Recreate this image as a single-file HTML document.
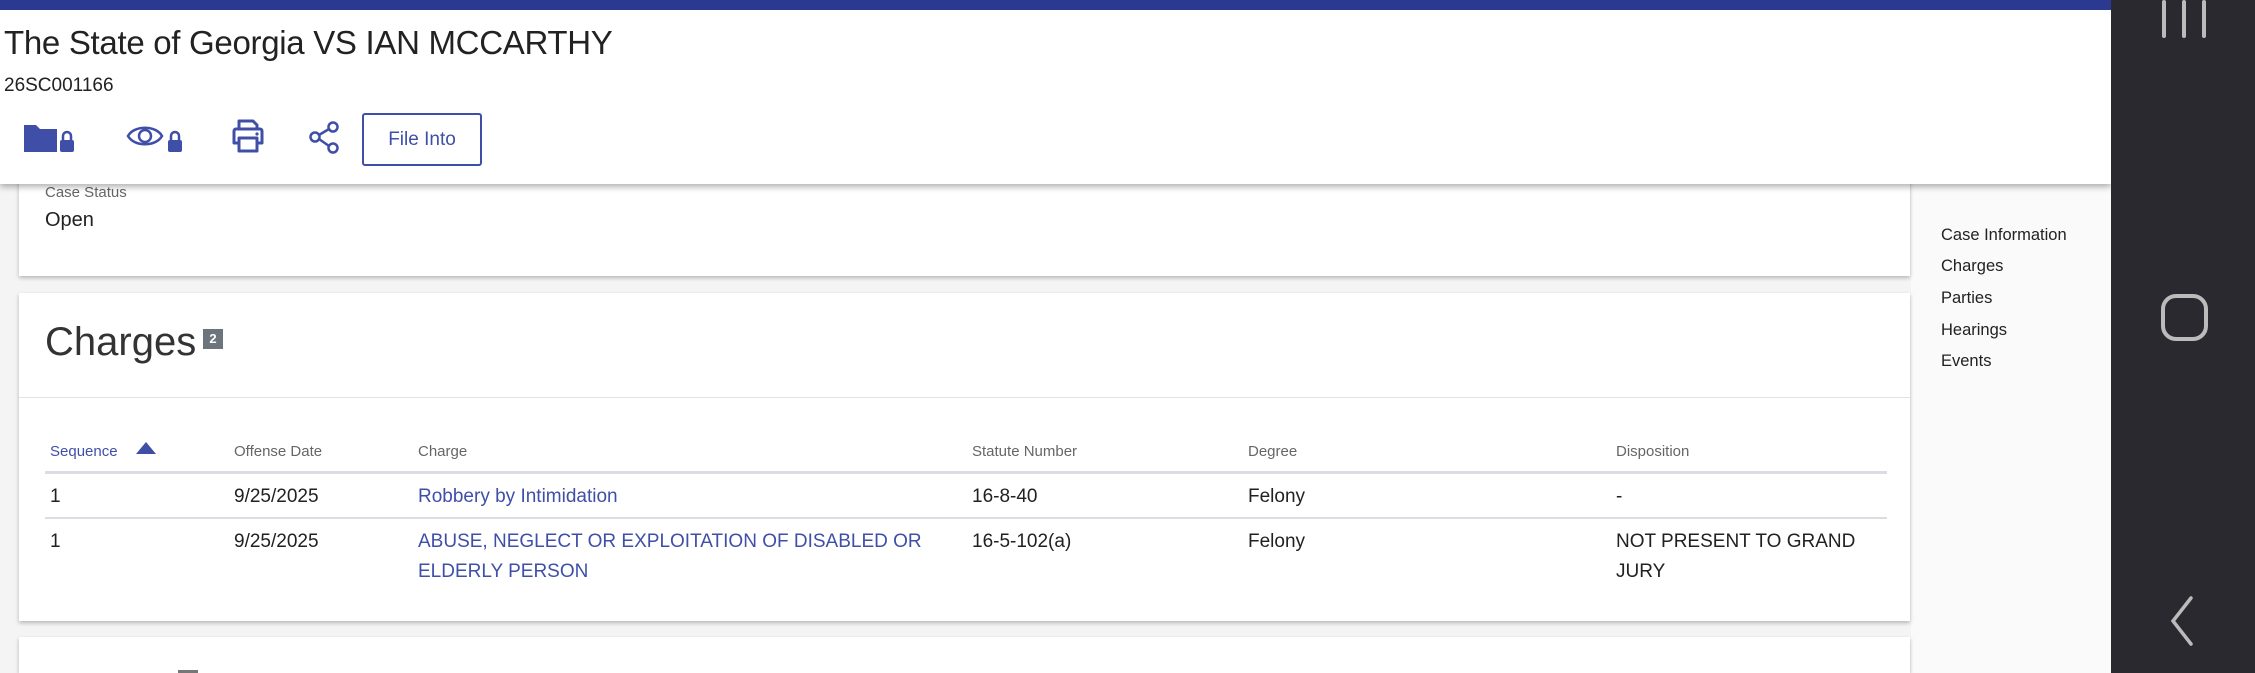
<!DOCTYPE html>
<html><head><meta charset="utf-8"><style>
*{box-sizing:border-box;margin:0;padding:0}
html{width:2255px;height:673px;overflow:hidden}
body{width:2255px;height:673px;overflow:hidden;background:#f4f4f4;font-family:"Liberation Sans",sans-serif;color:#212121;position:relative}
.abs{position:absolute}
.card{position:absolute;background:#fff;box-shadow:0 2px 4px rgba(0,0,0,.25)}
.th{position:absolute;top:443px;font-size:15px;color:#666}
.td{position:absolute;font-size:19px;line-height:30px;color:#212121}
.lnk{color:#3f4fa8}
.side a{display:block;position:absolute;left:1941px;font-size:16.5px;color:#222;text-decoration:none}
</style></head><body>
<div class="abs" style="left:1911px;top:184px;width:200px;height:489px;background:#fafafa"></div>
<div class="side">
<a style="top:226px">Case Information</a>
<a style="top:257px">Charges</a>
<a style="top:289px">Parties</a>
<a style="top:321px">Hearings</a>
<a style="top:352px">Events</a>
</div>
<div class="card" style="left:19px;top:150px;width:1891px;height:126px">
<div class="abs" style="left:26px;top:34px;font-size:15px;color:#666">Case Status</div>
<div class="abs" style="left:26px;top:59px;font-size:20px">Open</div>
</div>
<div class="card" style="left:19px;top:293px;width:1891px;height:328px">
<div class="abs" style="left:26px;top:27px;font-size:40px;color:#333;font-weight:300">Charges</div>
<div class="abs" style="left:184px;top:36px;width:20px;height:20px;background:#6c757d;color:#fff;font-size:13px;font-weight:bold;text-align:center;line-height:20px">2</div>
<div class="abs" style="left:0;top:104px;width:1891px;height:1px;background:#e3e3e3"></div>
</div>
<div class="card" style="left:19px;top:637px;width:1891px;height:36px">
<div class="abs" style="left:159px;top:33px;width:20px;height:4px;background:#777"></div>
</div>
<div class="th lnk" style="left:50px;color:#3f4fa8">Sequence</div>
<svg class="abs" style="left:136px;top:442px" width="20" height="12"><polygon points="10,0 20,12 0,12" fill="#3f4fa8"/></svg>
<div class="th" style="left:234px">Offense Date</div>
<div class="th" style="left:418px">Charge</div>
<div class="th" style="left:972px">Statute Number</div>
<div class="th" style="left:1248px">Degree</div>
<div class="th" style="left:1616px">Disposition</div>
<div class="abs" style="left:45px;top:471px;width:1842px;height:3px;background:#dcdde2"></div>
<div class="abs" style="left:45px;top:517px;width:1842px;height:2px;background:#dcdde2"></div>
<div class="td" style="left:50px;top:482px">1</div>
<div class="td" style="left:234px;top:482px">9/25/2025</div>
<div class="td lnk" style="left:418px;top:482px">Robbery by Intimidation</div>
<div class="td" style="left:972px;top:482px">16-8-40</div>
<div class="td" style="left:1248px;top:482px">Felony</div>
<div class="td" style="left:1616px;top:482px">-</div>
<div class="td" style="left:50px;top:527px">1</div>
<div class="td" style="left:234px;top:527px">9/25/2025</div>
<div class="td lnk" style="left:418px;top:527px;width:540px">ABUSE, NEGLECT OR EXPLOITATION OF DISABLED OR ELDERLY PERSON</div>
<div class="td" style="left:972px;top:527px">16-5-102(a)</div>
<div class="td" style="left:1248px;top:527px">Felony</div>
<div class="td" style="left:1616px;top:527px;width:260px">NOT PRESENT TO GRAND JURY</div>

<div class="abs" style="left:0;top:0;width:2111px;height:184px;background:#fff;box-shadow:0 3px 6px rgba(0,0,0,.3)">
<div class="abs" style="left:0;top:0;width:2111px;height:10px;background:#2b3990"></div>
<div class="abs" style="left:4px;top:24px;font-size:33px;color:#222;letter-spacing:-0.3px">The State of Georgia VS IAN MCCARTHY</div>
<div class="abs" style="left:4px;top:75px;font-size:19px;color:#222">26SC001166</div>
<svg class="abs" style="left:24px;top:122px" width="60" height="32" viewBox="0 0 60 32"><path d="M0 3h12l4 4h17v23H0z" fill="#3f4fa8"/><rect x="36" y="18" width="14" height="12" rx="2" fill="#3f4fa8"/><path d="M39 18v-4a4 4 0 0 1 8 0v4" stroke="#3f4fa8" stroke-width="2.5" fill="none"/></svg>
<svg class="abs" style="left:126px;top:122px" width="62" height="32" viewBox="0 0 62 32"><path d="M2 14C8 3 30 3 36 14C30 25 8 25 2 14z" stroke="#3f4fa8" stroke-width="2.5" fill="none"/><circle cx="19" cy="14" r="6" stroke="#3f4fa8" stroke-width="2.5" fill="none"/><rect x="42" y="18" width="14" height="12" rx="2" fill="#3f4fa8"/><path d="M45 18v-4a4 4 0 0 1 8 0v4" stroke="#3f4fa8" stroke-width="2.5" fill="none"/></svg>
<svg class="abs" style="left:232px;top:119px" width="32" height="34" viewBox="0 0 32 34"><path d="M7 10V2h14l4 4v4M4 10h24a2 2 0 0 1 2 2v12h-5M7 24H2V12a2 2 0 0 1 2-2M7 19h18v13H7z" stroke="#3f4fa8" stroke-width="3" fill="none" stroke-linejoin="round"/><circle cx="25" cy="15" r="1.6" fill="#3f4fa8"/></svg>
<svg class="abs" style="left:308px;top:121px" width="32" height="34" viewBox="0 0 32 34"><circle cx="25" cy="6" r="4.5" stroke="#3f4fa8" stroke-width="2.5" fill="none"/><circle cx="7" cy="16" r="4.5" stroke="#3f4fa8" stroke-width="2.5" fill="none"/><circle cx="25" cy="27" r="4.5" stroke="#3f4fa8" stroke-width="2.5" fill="none"/><path d="M11 14l10-6M11 18l10 7" stroke="#3f4fa8" stroke-width="2.5"/></svg>
<div class="abs" style="left:362px;top:113px;width:120px;height:53px;border:2px solid #3f4fa8;border-radius:3px;color:#3f4fa8;font-size:19px;text-align:center;line-height:49px">File Into</div>
</div>

<div class="abs" style="left:2111px;top:0;width:144px;height:673px;background:#2a2930">
<div class="abs" style="left:51px;top:0;width:4px;height:38px;background:#bbb;border-radius:2px"></div>
<div class="abs" style="left:71px;top:0;width:4px;height:38px;background:#bbb;border-radius:2px"></div>
<div class="abs" style="left:91px;top:0;width:4px;height:38px;background:#bbb;border-radius:2px"></div>
<div class="abs" style="left:50px;top:294px;width:47px;height:47px;border:4px solid #bbb;border-radius:15px"></div>
<svg class="abs" style="left:56px;top:596px" width="30" height="50"><path d="M24 2L6 25l18 23" stroke="#bbb" stroke-width="3.5" fill="none" stroke-linecap="round"/></svg>
</div>
</body></html>
